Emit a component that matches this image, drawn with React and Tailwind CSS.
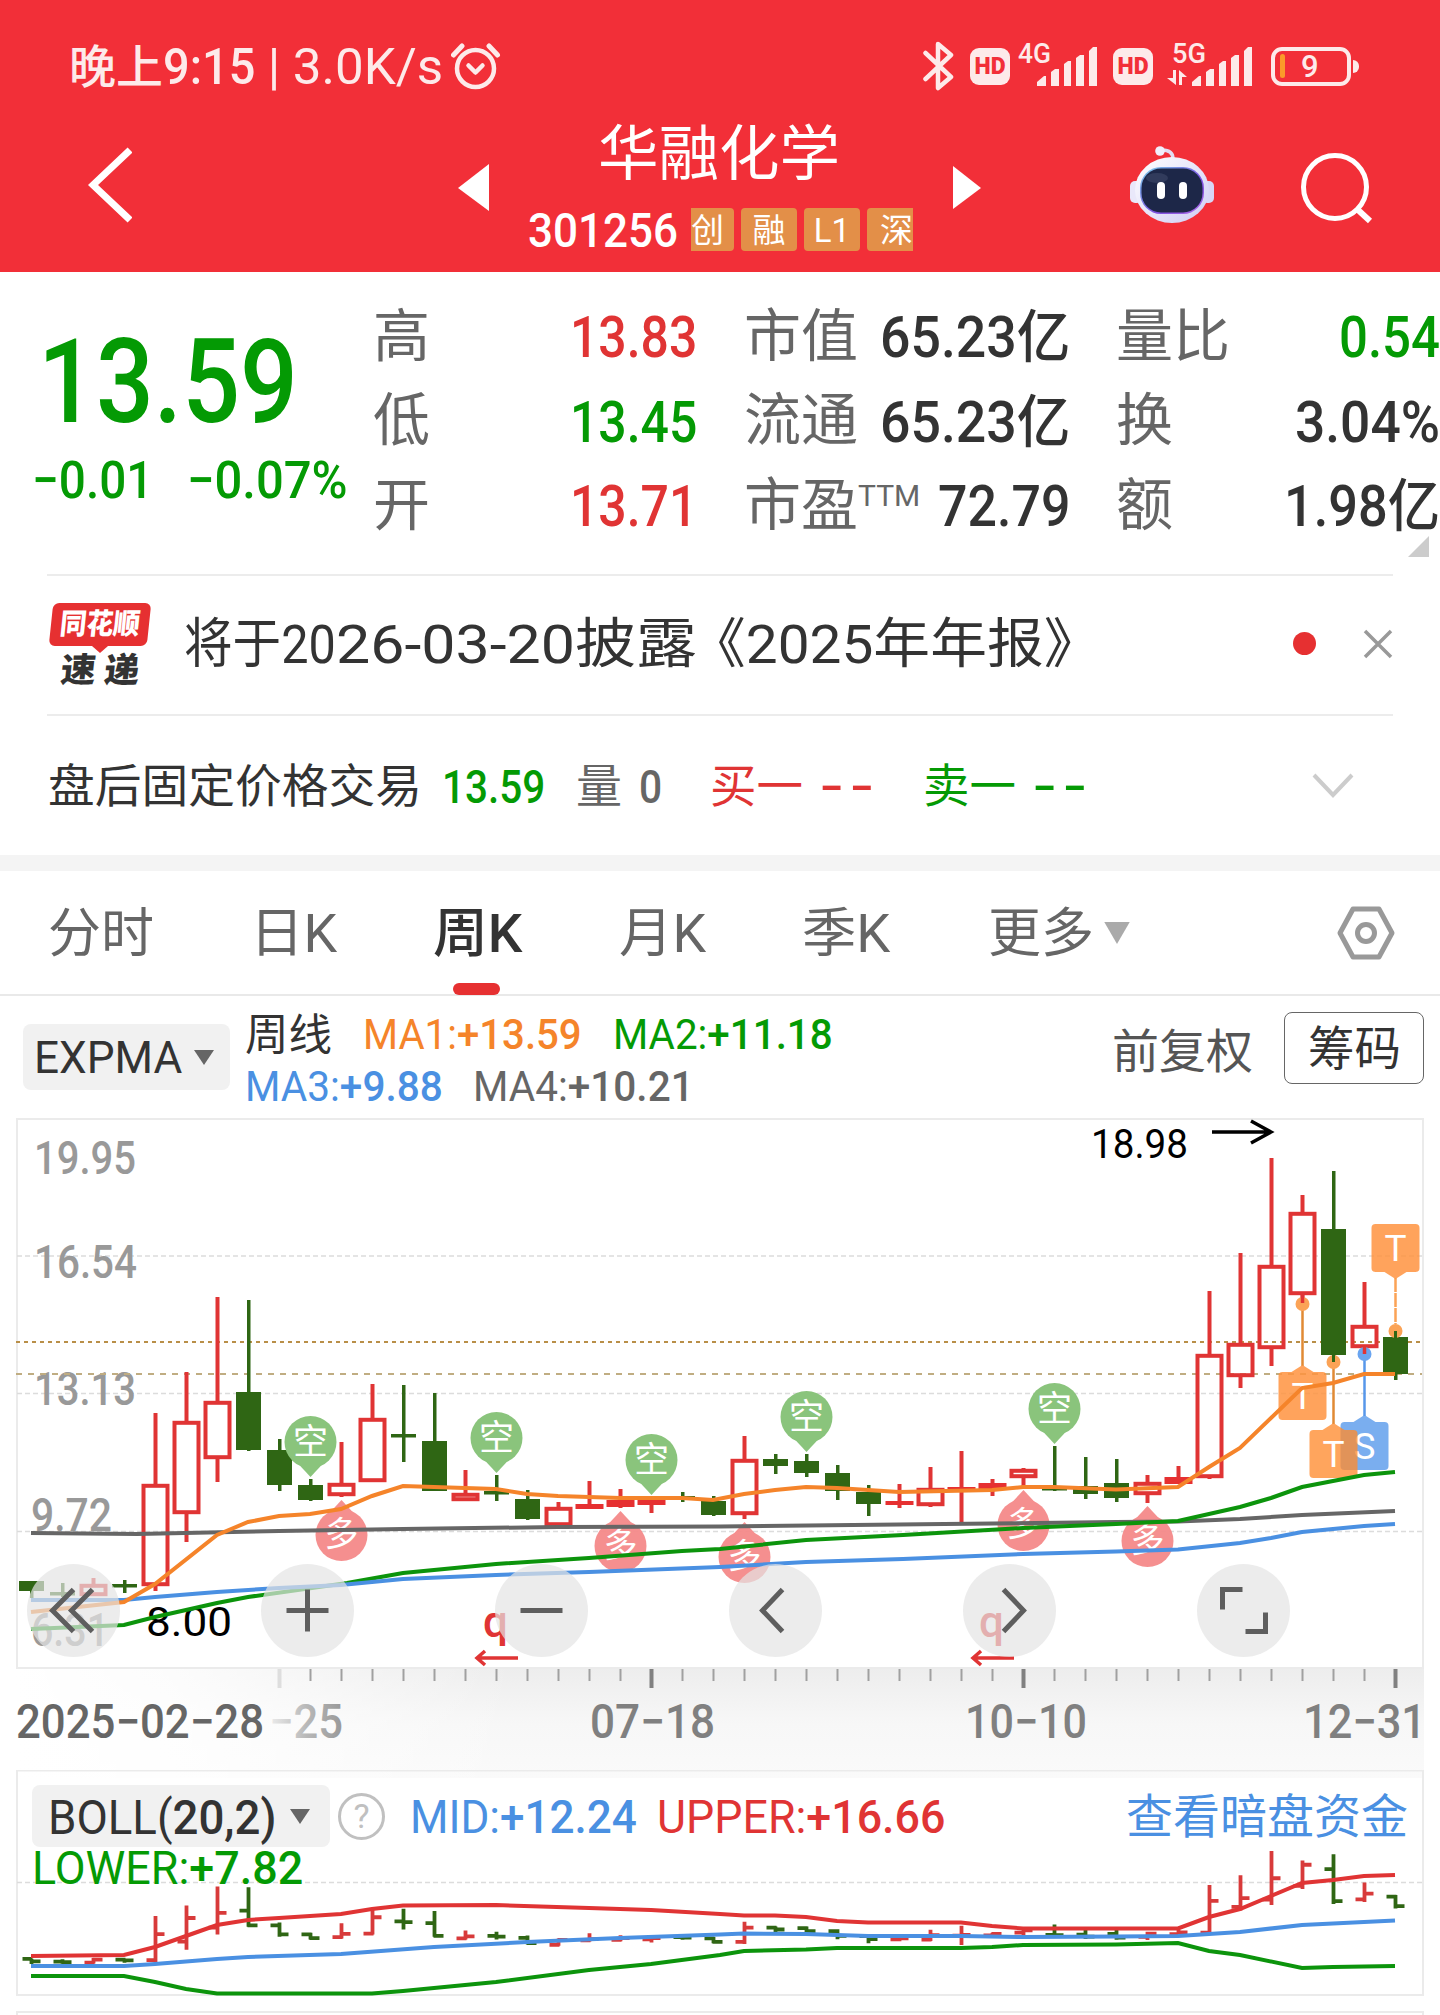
import { useLayoutEffect, useRef, useState } from "react";

const FONT = "font-['Roboto','Noto_Sans_CJK_SC',sans-serif]";
const SVG_FONT = "Roboto, 'Noto Sans CJK SC', sans-serif";

const RED = "#e03434";
const CANDLE_GREEN = "#2f6614";

// color, high, bodyTop, bodyBottom, low, filled
const candles = [
  ["g", 1581, 1581, 1591, 1598],
  ["g", 1583, 1592, 1594, 1597],
  ["r", 1578, 1584, 1596, 1596],
  ["g", 1580, 1584, 1587, 1593],
  ["r", 1413, 1484, 1586, 1591],
  ["r", 1372, 1421, 1514, 1542],
  ["r", 1297, 1401, 1459, 1482],
  ["g", 1300, 1392, 1450, 1451],
  ["g", 1439, 1450, 1485, 1491],
  ["g", 1479, 1485, 1500, 1501],
  ["r", 1442, 1483, 1496, 1497],
  ["r", 1384, 1418, 1482, 1482],
  ["g", 1385, 1434, 1437, 1462],
  ["g", 1393, 1441, 1491, 1491],
  ["r", 1470, 1493, 1501, 1501],
  ["g", 1475, 1491, 1494, 1501],
  ["g", 1490, 1499, 1519, 1520],
  ["r", 1502, 1507, 1526, 1526],
  ["r", 1481, 1504, 1509, 1509, true],
  ["r", 1489, 1500, 1507, 1508, true],
  ["r", 1497, 1500, 1505, 1513, true],
  ["g", 1492, 1496, 1498, 1502],
  ["g", 1496, 1501, 1515, 1516],
  ["r", 1436, 1459, 1515, 1519],
  ["g", 1454, 1459, 1466, 1474],
  ["g", 1454, 1461, 1473, 1477],
  ["g", 1465, 1473, 1491, 1500],
  ["g", 1485, 1492, 1504, 1516],
  ["r", 1484, 1501, 1505, 1508, true],
  ["r", 1467, 1488, 1506, 1507],
  ["r", 1451, 1487, 1490, 1523, true],
  ["r", 1479, 1483, 1489, 1496, true],
  ["r", 1468, 1469, 1478, 1487],
  ["g", 1446, 1487, 1488, 1491],
  ["g", 1457, 1486, 1494, 1499],
  ["g", 1459, 1483, 1498, 1502],
  ["r", 1475, 1482, 1495, 1503],
  ["r", 1466, 1477, 1484, 1484, true],
  ["r", 1291, 1354, 1478, 1479],
  ["r", 1253, 1343, 1377, 1388],
  ["r", 1158, 1265, 1349, 1366],
  ["r", 1195, 1212, 1295, 1303],
  ["g", 1171, 1229, 1355, 1362],
  ["r", 1282, 1325, 1348, 1354],
  ["g", 1331, 1337, 1374, 1380],
];

const candleX = (i) => 31.5 + 31 * i;

const maLines = [
  { color: "#666666", points: "31,1533 137,1534 279,1531 403,1529 558,1527 720,1526.5 944,1524 1116,1522 1178,1521.5 1240,1519 1302,1515 1395,1511" },
  { color: "#0c940c", points: "31,1629 124,1625 155,1617 217,1603 248,1597 347,1583 403,1573 496,1564 589,1558 682,1551 720,1549 806,1540 903,1535 1023,1528 1116,1524 1178,1521 1240,1507 1271,1498 1302,1487 1364,1475 1395,1472" },
  { color: "#4a90e2", points: "31,1600 124,1600 155,1597 217,1592 279,1588 341,1585 403,1579 496,1575 589,1572 720,1567 806,1562 903,1559 1023,1554 1116,1551.5 1178,1549.5 1240,1543 1271,1538 1302,1532 1364,1526 1395,1524" },
  { color: "#f5842a", points: "31,1612 124,1602 155,1584 217,1535 248,1522 279,1516 310,1514 341,1509 372,1496 403,1486 434,1487 496,1489 527,1494 558,1496 620,1498 682,1498 713,1500 744,1494 775,1490 806,1487 837,1488 899,1492 992,1490 1023,1487 1054,1487 1116,1489.5 1178,1487 1209,1467 1240,1448 1302,1388 1333,1383 1364,1374 1395,1374" },
];

const bollLines = [
  { color: "#e03434", points: "31,1956 124,1955 155,1947 186,1936 217,1925 248,1920 279,1918 341,1914 372,1909 403,1905.5 496,1905 589,1908 651,1910 720,1914 744,1915.5 775,1915.5 806,1917 837,1921 868,1922.5 961,1922.5 992,1926 1023,1928.5 1178,1928.5 1209,1917 1240,1909 1302,1883 1333,1880 1364,1876 1395,1875" },
  { color: "#4a90e2", points: "31,1966 124,1966 155,1964 217,1959 248,1957 341,1954 434,1947 527,1942 620,1938 720,1934.5 744,1933.5 806,1934 868,1936 961,1936 1023,1937 1116,1936.5 1178,1936 1240,1932 1302,1925 1364,1922 1395,1920.5" },
  { color: "#0c940c", points: "31,1976 124,1976 155,1982 186,1989 217,1993.5 372,1993.5 403,1991 434,1988 496,1982 589,1970 651,1964 720,1955 744,1951 806,1949.5 837,1948 961,1948 992,1947 1023,1945 1116,1944.5 1178,1943 1209,1951 1240,1955 1302,1968 1333,1967 1395,1966" },
];

const quotes = [
  { a: "高", av: "13.83", ac: "text-[#e03434]", b: "市值", bv: "65.23亿", bw: 190, c: "量比", cw: 114, cv: "0.54", cvw: 101, cc: "text-[#049a04]" },
  { a: "低", av: "13.45", ac: "text-[#049a04]", b: "流通", bv: "65.23亿", bw: 190, c: "换", cw: 57, cv: "3.04%", cvw: 145, cc: "text-[#333]" },
  { a: "开", av: "13.71", ac: "text-[#e03434]", b: "市盈", ttm: true, bv: "72.79", bw: 132, c: "额", cw: 57, cv: "1.98亿", cvw: 156, cc: "text-[#333]" },
];

// Text squeezed to an exact width
function Fit({ w, className = "", children }) {
  const ref = useRef(null);
  const [scale, setScale] = useState(1);

  useLayoutEffect(() => {
    setScale(w / ref.current.offsetWidth);
  }, [w]);

  return (
    <span className={`flex shrink-0 items-center ${className}`} style={{ width: w }}>
      <span
        ref={ref}
        className="inline-block origin-left whitespace-pre leading-none"
        style={{ transform: `scaleX(${scale})` }}
      >
        {children}
      </span>
    </span>
  );
}

// Indicator name in regular weight, its value in medium
function Reading({ name, value, w, className }) {
  return (
    <Fit w={w} className={className}>
      {name}
      <span className="font-medium">{value}</span>
    </Fit>
  );
}

function Label({ x, y, w, size, fill = "#999", weight = 400, children }) {
  return (
    <text x={x} y={y} textLength={w} lengthAdjust="spacingAndGlyphs" fontSize={size} fill={fill} fontWeight={weight} fontFamily={SVG_FONT}>
      {children}
    </text>
  );
}

function Caret({ className = "", color = "#666", w = 22, h = 15 }) {
  return (
    <svg width={w} height={h} viewBox="0 0 22 15" preserveAspectRatio="none" className={`shrink-0 ${className}`}>
      <path d="M1 0h20L11 15z" fill={color} />
    </svg>
  );
}

function Signal() {
  return (
    <svg width="61" height="40" viewBox="0 0 61 40" fill="#fdeaea">
      <path d="M0 39V35L7 29H9V39z" />
      <path d="M14 39V25L18 22H22V39z" />
      <path d="M27 39V17L31 14H34V39z" />
      <path d="M39 39V11L43 8H47V39z" />
      <path d="M52 39V4L56 0H60V39z" />
    </svg>
  );
}

function HdBadge({ className }) {
  return (
    <div className={`flex h-[37px] w-10 shrink-0 items-center justify-center rounded-[9px] bg-[#fdeaea] ${className}`}>
      <Fit w={31} className="text-[23px] font-black text-[#f22f38]">HD</Fit>
    </div>
  );
}

function StatusBar() {
  return (
    <div className="flex h-[104px] items-center pt-[29px] text-[#fdeaea]">
      <Fit w={94} className="ml-[69px] h-[50px] text-[46px] font-medium">晚上</Fit>
      <Fit w={92} className="h-[50px] text-[50px] font-medium">9:15</Fit>
      <Fit w={188} className="h-[50px] text-[50px]"> | 3.0K/s</Fit>
      <svg width="50" height="48" viewBox="0 0 50 48" className="ml-2 mt-[-2px]" fill="none" stroke="#fdeaea" strokeWidth="4.5" strokeLinecap="round" strokeLinejoin="round">
        <circle cx="24.5" cy="26.5" r="18.5" />
        <path d="M2.5 13 L11 4 M38 4 L46.500 13" strokeWidth="5" />
        <path d="M17.500 23.500 L24.500 30.500 L31.500 23.500" />
      </svg>
      <svg width="32" height="50" viewBox="0 0 32 50" className="ml-[422px] mt-[-2px]" fill="none" stroke="#fdeaea" strokeWidth="4.500" strokeLinejoin="round" strokeLinecap="round">
        <path d="M2.500 12 L28 36 L15 47 V3 L28 14 L2.500 38" />
      </svg>
      <HdBadge className="ml-[15px]" />
      <Fit w={33} className="ml-2 mt-[-26px] text-[28px] font-medium">4G</Fit>
      <div className="-ml-3.5">
        <Signal />
      </div>
      <HdBadge className="ml-[15px]" />
      <div className="ml-[14px] mt-[-6px] flex w-[38px] flex-col">
        <Fit w={34} className="ml-[5px] h-[26px] text-[28px] font-medium">5G</Fit>
        <svg width="21" height="16" viewBox="0 0 21 16" className="mt-[3px]" fill="#fdeaea">
          <path d="M6 0H9V15L0 8H6zM12 15V0L20 7H15V15z" />
        </svg>
      </div>
      <div className="ml-[-13px]">
        <Signal />
      </div>
      <div className="ml-[18px] mt-[-1px] flex h-[39px] w-20 items-center rounded-[11px] border-4 border-[#fdeaea] pl-[5px]">
        <span className="h-6 w-[5px] rounded-sm bg-[#fb9a2a]" />
        <span className="ml-4 text-[31px] font-medium leading-none">9</span>
      </div>
      <span className="ml-0.5 h-[13px] w-1.5 rounded-r-md bg-[#fdeaea]" />
    </div>
  );
}

function Robot() {
  return (
    <svg width="86" height="80" viewBox="0 0 86 80" className="shrink-0">
      <defs>
        <linearGradient id="shell" x1="0" y1="0" x2="1" y2="1">
          <stop offset="0" stopColor="#ffffff" />
          <stop offset="1" stopColor="#cfcdf4" />
        </linearGradient>
        <linearGradient id="rim" x1="0" y1="0" x2="1" y2="1">
          <stop offset="0" stopColor="#79cfe8" />
          <stop offset="0.6" stopColor="#7a4fe0" />
          <stop offset="1" stopColor="#b06be8" />
        </linearGradient>
      </defs>
      <path d="M44 14C44 7 39 5 33 5" fill="none" stroke="#e2ddf3" strokeWidth="3.500" />
      <circle cx="31" cy="6" r="4.800" fill="#f1eefb" />
      <rect x="1" y="36" width="12" height="22" rx="5" fill="#e9e8fa" />
      <rect x="73" y="36" width="12" height="22" rx="5" fill="#d8d6f5" />
      <ellipse cx="43" cy="45" rx="37" ry="33" fill="url(#shell)" />
      <rect x="11" y="22" width="64" height="47" rx="21" fill="url(#rim)" />
      <rect x="12.500" y="23.500" width="61" height="44" rx="19.500" fill="#1d2748" />
      <ellipse cx="28" cy="33" rx="11" ry="5" fill="#46506f" opacity="0.5" />
      <rect x="28" y="37" width="8" height="17" rx="4" fill="#fff" />
      <rect x="50" y="37" width="8" height="17" rx="4" fill="#fff" />
    </svg>
  );
}

function Header() {
  return (
    <header className="h-[272px] overflow-hidden bg-[#f22f38] text-white">
      <StatusBar />
      <div className="flex h-[168px] items-start">
        <svg width="44" height="80" viewBox="0 0 44 80" className="ml-[88px] mt-[41px]">
          <path d="M42 5 L5 40 L42 75" fill="none" stroke="#fff" strokeWidth="7" />
        </svg>
        <svg width="32" height="48" viewBox="0 0 32 48" className="ml-[326px] mt-[60px]">
          <path d="M31 0V47L0 24z" fill="#fff" />
        </svg>
        <div className="ml-[37px] flex w-[387px] flex-col">
          <Fit w={242} className="ml-[71px] mt-[20px] h-[62px] text-[60px]">华融化学</Fit>
          <div className="mt-[20px] flex h-[46px] items-center">
            <Fit w={150} className="ml-px mt-[3px] text-[49px] font-medium">301256</Fit>
            <div className="ml-[13px] flex h-[43px] items-center gap-[7px] text-[33px] leading-none">
              <span className="flex h-full w-[43px] items-center rounded-r bg-[#e38f48] pt-0.5">创</span>
              <span className="flex h-full w-14 items-center justify-center rounded bg-[#e38f48] pt-0.5">融</span>
              <span className="flex h-full w-14 items-center justify-center rounded bg-[#e38f48] pt-0.5">L1</span>
              <span className="flex h-full w-[46px] items-center justify-end rounded-l bg-[#e38f48] pt-0.5">深</span>
            </div>
          </div>
        </div>
        <svg width="28" height="44" viewBox="0 0 28 44" className="ml-[39px] mt-[62px]">
          <path d="M0 0V43L28 22z" fill="#fff" />
        </svg>
        <div className="ml-[148px] mt-[41px]">
          <Robot />
        </div>
        <svg width="72" height="72" viewBox="0 0 72 72" className="ml-[86px] mt-[48px]" fill="none" stroke="#fff" strokeWidth="5">
          <circle cx="34" cy="35" r="31.500" />
          <path d="M56 57 L69 69" strokeWidth="6" />
        </svg>
      </div>
    </header>
  );
}

function QuotePanel() {
  return (
    <section className="flex h-[302px] overflow-hidden">
      <div className="w-[373px] shrink-0 pt-[52px]">
        <Fit w={260} className="ml-[38px] h-[116px] text-[116px] font-medium text-[#049a04]">13.59</Fit>
        <div className="mt-[15px] flex h-[52px] text-[52px] font-medium text-[#049a04]">
          <Fit w={121} className="ml-8">−0.01</Fit>
          <Fit w={161} className="ml-[34px]">−0.07%</Fit>
        </div>
      </div>
      <div className="relative w-[1067px] pt-[22px]">
        {quotes.map((q) => (
          <div key={q.a} className="flex h-[84.5px] items-center text-[57px]">
            <Fit w={57} className="text-[#666]">{q.a}</Fit>
            <Fit w={127} className={`ml-[140px] mt-[3px] font-medium ${q.ac}`}>{q.av}</Fit>
            <Fit w={114} className="ml-[47px] text-[#666]">{q.b}</Fit>
            <div className="flex w-[212px] items-center justify-end">
              {q.ttm && <Fit w={62} className="mb-[18px] mr-auto text-[30px] text-[#666]">TTM</Fit>}
              <Fit w={q.bw} className="mt-[3px] font-medium text-[#333]">{q.bv}</Fit>
            </div>
            <Fit w={q.cw} className="ml-[46px] text-[#666]">{q.c}</Fit>
            <div className="flex flex-1 justify-end">
              <Fit w={q.cvw} className={`mt-[3px] font-medium ${q.cc}`}>{q.cv}</Fit>
            </div>
          </div>
        ))}
        <svg width="21" height="21" viewBox="0 0 21 21" className="absolute right-[11px] top-[264px]">
          <path d="M21 0V21H0z" fill="#ccc" />
        </svg>
      </div>
    </section>
  );
}

function NoticeRow() {
  return (
    <section className="mx-[47px] flex h-[140px] items-center border-t-2 border-[#ececec] pb-1">
      <div className="mt-[3px] flex w-[105px] flex-col items-center">
        <div className="flex h-[43px] w-[98px] -skew-x-6 items-center justify-center rounded-md bg-[#e63031]">
          <Fit w={80} className="text-[29px] font-black text-white">同花顺</Fit>
        </div>
        <svg width="16" height="7" viewBox="0 0 16 7">
          <path d="M0 0H16L8 7z" fill="#e63031" />
        </svg>
        <div className="-skew-x-6">
          <Fit w={78} className="text-[34px] font-black text-[#333]">速 递</Fit>
        </div>
      </div>
      <Fit w={152} className="ml-[32px] mt-[3px] text-[54px] text-[#333]">将于20</Fit>
      <Fit w={361} className="mt-[3px] text-[54px] text-[#333]">26-03-20披露</Fit>
      <Fit w={411} className="ml-[-8px] mt-[3px] text-[54px] text-[#333]">《2025年年报》</Fit>
      <span className="ml-[193px] size-[23px] rounded-full bg-[#e63031]" />
      <svg width="30" height="30" viewBox="0 0 30 30" className="ml-[47px] mt-0.5">
        <path d="M2 2 L28 28 M28 2 L2 28" stroke="#999" strokeWidth="3.500" />
      </svg>
    </section>
  );
}

function AfterHoursRow() {
  return (
    <section className="mx-[47px] flex h-[141px] items-center border-t-2 border-[#ececec] pl-px text-[46px]">
      <Fit w={374} className="text-[#333]">盘后固定价格交易</Fit>
      <Fit w={103} className="ml-[20px] mt-0.5 font-medium text-[#049a04]">13.59</Fit>
      <Fit w={46} className="ml-[31px] text-[#666]">量</Fit>
      <Fit w={23} className="ml-[17px] mt-0.5 font-medium text-[#666]">0</Fit>
      <Fit w={93} className="ml-[48px] text-[#e03434]">买一</Fit>
      <Fit w={60} className="ml-[17px] font-medium tracking-[0.1em] text-[#e03434]">--</Fit>
      <Fit w={93} className="ml-[43px] text-[#049a04]">卖一</Fit>
      <Fit w={60} className="ml-[17px] font-medium tracking-[0.1em] text-[#049a04]">--</Fit>
      <svg width="42" height="26" viewBox="0 0 42 26" className="ml-[219px]">
        <path d="M2 2 L21 22 L40 2" fill="none" stroke="#ccc" strokeWidth="4" />
      </svg>
    </section>
  );
}

function Tabs() {
  return (
    <nav className="flex h-[125px] items-center border-b-2 border-[#e9e9e9] pl-[48px] pt-1 text-[53px] text-[#666]">
      <Fit w={106}>分时</Fit>
      <Fit w={87} className="ml-[96px]">日K</Fit>
      <div className="relative ml-[96px]">
        <Fit w={90} className="font-medium text-[#333]">周K</Fit>
        <span className="absolute left-[20px] top-[75px] h-3 w-[47px] rounded-full bg-[#e63031]" />
      </div>
      <Fit w={87} className="ml-[96px]">月K</Fit>
      <Fit w={88} className="ml-[96px]">季K</Fit>
      <Fit w={106} className="ml-[98px]">更多</Fit>
      <Caret w={28} h={22} color="#aaa" className="ml-[9px] mt-[-3px]" />
      <svg width="58" height="54" viewBox="0 0 58 54" className="ml-[206px] mt-[-3px]" fill="none" stroke="#999" strokeWidth="5" strokeLinejoin="round">
        <path d="M16 3 H42 L55 27 L42 51 H16 L3 27z" />
        <circle cx="29" cy="27" r="8.500" />
      </svg>
    </nav>
  );
}

function IndicatorBar() {
  return (
    <div className="flex h-[122px] items-start">
      <div className="ml-[23px] mt-[28px] flex h-[66px] w-[207px] items-center rounded-lg bg-[#f1f1f1] pl-[11px]">
        <Fit w={148} className="mt-px text-[45px] text-[#333]">EXPMA</Fit>
        <Caret className="ml-[11px]" />
      </div>
      <div className="ml-[15px] mt-[12px] w-[600px] text-[42px]">
        <div className="flex h-[54px] items-center">
          <Fit w={87} className="text-[43px] text-[#333]">周线</Fit>
          <Reading w={219} className="ml-[31px] text-[#f5842a]" name="MA1:" value="+13.59" />
          <Reading w={220} className="ml-[31px] text-[#049a04]" name="MA2:" value="+11.18" />
        </div>
        <div className="flex h-[50px] items-center">
          <Reading w={198} className="text-[#4a90e2]" name="MA3:" value="+9.88" />
          <Reading w={221} className="ml-[30px] text-[#666]" name="MA4:" value="+10.21" />
        </div>
      </div>
      <Fit w={141} className="ml-[267px] mt-[32px] text-[47px] text-[#555]">前复权</Fit>
      <div className="ml-[31px] mt-[16px] flex h-[72px] w-[140px] items-center justify-center rounded-lg border border-[#666]">
        <Fit w={93} className="text-[47px] text-[#333]">筹码</Fit>
      </div>
    </div>
  );
}

function ShortPin({ x, top }) {
  return (
    <g>
      <circle cx={x} cy={top + 26} r="26" fill="#8ac47c" />
      <path d={`M${x - 13} ${top + 47} L${x} ${top + 61} L${x + 13} ${top + 47}z`} fill="#8ac47c" />
      <text x={x} y={top + 38} textAnchor="middle" fontSize="35" fill="#fff" fontFamily={SVG_FONT}>空</text>
    </g>
  );
}

function LongPin({ x, top }) {
  return (
    <g opacity="0.95">
      <path d={`M${x - 13} ${top + 14} L${x} ${top} L${x + 13} ${top + 14}z`} fill="#f58a8a" />
      <circle cx={x} cy={top + 35} r="26" fill="#f58a8a" />
      <text x={x} y={top + 46} textAnchor="middle" fontSize="34" fill="#fff" fontFamily={SVG_FONT}>多</text>
    </g>
  );
}

function TradeMark({ x, y, up, color, letter, opacity }) {
  const tip = up ? `M${x - 11} ${y} L${x} ${y - 7} L${x + 11} ${y}z` : `M${x - 11} ${y + 48} L${x} ${y + 55} L${x + 11} ${y + 48}z`;
  return (
    <g>
      <g opacity={opacity}>
        <rect x={x - 24} y={y} width="48" height="48" rx="4" fill={color} />
        <path d={tip} fill={color} />
      </g>
      <text x={x} y={y + 37} textAnchor="middle" fontSize="37" fill="#fff" fontFamily={SVG_FONT}>{letter}</text>
    </g>
  );
}

function Candle({ i, data }) {
  const [color, high, top, bottom, low, filled] = data;
  const x = candleX(i);
  if (color === "g") {
    return (
      <g fill={CANDLE_GREEN}>
        <rect x={x - 1.5} y={high} width="3.5" height={low - high} />
        <rect x={x - 12.5} y={top} width="25" height={Math.max(bottom - top, 3.5)} />
      </g>
    );
  }
  return (
    <g stroke={RED} strokeWidth="4" fill="none">
      <path d={`M${x} ${high}V${top} M${x} ${bottom}V${low}`} />
      {filled ? (
        <rect x={x - 14} y={top} width="28" height={bottom - top} fill="#e63031" stroke="none" />
      ) : (
        <rect x={x - 12} y={top + 1.8} width="24" height={bottom - top - 3.6} />
      )}
    </g>
  );
}

function RoundButton({ x, children }) {
  return (
    <g>
      <circle cx={x} cy="1610.5" r="46.5" fill="#e4e4e4" opacity="0.7" />
      <g transform={`translate(${x} 1610.5)`} fill="none" stroke="#5e5e5e" strokeWidth="5">
        {children}
      </g>
    </g>
  );
}

function KLineChart() {
  return (
    <svg width="1440" height="551" viewBox="0 1118 1440 551" className="block">
      <rect x="17" y="1119" width="1406" height="549" fill="none" stroke="#ebebeb" strokeWidth="2" />
      {[1256, 1393.5, 1531.5].map((y) => (
        <path key={y} d={`M17 ${y}H1422`} stroke="#dcdcdc" strokeWidth="1.300" strokeDasharray="5 3" />
      ))}
      <Label x={34} y={1174} w={102} size={46} weight={500}>19.95</Label>
      <Label x={34} y={1277.5} w={103} size={46} weight={500}>16.54</Label>
      <Label x={34} y={1405} w={102} size={46} weight={500}>13.13</Label>
      <Label x={31} y={1531} w={81} size={46} weight={500}>9.72</Label>
      <Label x={31} y={1646} w={78} size={46} weight={500}>6.31</Label>
      <path d="M16 1342H1422" stroke="#b98f48" strokeWidth="2" strokeDasharray="4 4" />
      <path d="M16 1374H1422" stroke="#c0ad82" strokeWidth="2" strokeDasharray="6 6" />

      {candles.map((c, i) => (
        <Candle key={i} i={i} data={c} />
      ))}

      {[[310.5, 1416], [496.5, 1412], [651.5, 1434], [806.5, 1391], [1054.5, 1383]].map(([x, top]) => (
        <ShortPin key={x} x={x} top={top} />
      ))}
      {[[341.5, 1500], [620.5, 1511], [744.5, 1522], [1023.5, 1490], [1147.5, 1506]].map(([x, top]) => (
        <LongPin key={x} x={x} top={top} />
      ))}

      {/* trade marks */}
      <g strokeWidth="2.500">
        <path d="M1395.500 1278V1324" stroke="#fba356" strokeDasharray="14 1" />
        <path d="M1302.500 1304V1366" stroke="#e08a34" />
        <path d="M1333.500 1362V1424" stroke="#e08a34" />
        <path d="M1364.500 1354V1416" stroke="#5797ea" />
      </g>
      <circle cx="1395.5" cy="1331" r="7" fill="#fba356" />
      <circle cx="1302.5" cy="1304" r="7" fill="#fba356" />
      <circle cx="1333.5" cy="1362" r="7" fill="#fba356" />
      <circle cx="1364.5" cy="1354" r="7" fill="#6aa5f0" />
      <path d="M1302.500 1295V1303 M1364.500 1347V1354" stroke={RED} strokeWidth="3.500" />
      <path d="M1333.500 1354V1362 M1395.500 1331V1338" stroke={CANDLE_GREEN} strokeWidth="3" />
      <TradeMark x={1395.5} y={1224} color="#ff9440" letter="T" opacity={0.85} />
      <TradeMark x={1302.5} y={1372} up color="#ff9440" letter="T" opacity={0.85} />
      <TradeMark x={1364.5} y={1422} up color="#5a9bec" letter="S" opacity={0.8} />
      <TradeMark x={1333.5} y={1430} up color="#ff8c30" letter="T" opacity={0.78} />

      <Label x={1091} y={1158} w={97} size={41} fill="#000">18.98</Label>
      <path d="M1212 1132H1271 M1251 1121L1271 1132L1251 1143" fill="none" stroke="#000" strokeWidth="3.500" />
      <Label x={146} y={1636} w={86} size={41} fill="#000">8.00</Label>
      {[476, 972].map((x) => (
        <g key={x}>
          <text x={x + 7} y={1637} fontSize="44" fontWeight="500" fill={RED} fontFamily={SVG_FONT}>q</text>
          <path d={`M${x + 42} 1658H${x + 2} M${x + 9} 1651L${x + 1} 1658L${x + 9} 1665`} fill="none" stroke={RED} strokeWidth="3.500" />
        </g>
      ))}

      {maLines.map((l) => (
        <polyline key={l.color} points={l.points} fill="none" stroke={l.color} strokeWidth="4" />
      ))}

      <RoundButton x={73.5}>
        <path d="M0 -21L-21 0L0 21 M19 -21L-2 0L19 21" />
      </RoundButton>
      <RoundButton x={307.5}>
        <path d="M-21 0H21 M0 -21V21" />
      </RoundButton>
      <RoundButton x={541.5}>
        <path d="M-21 0H21" />
      </RoundButton>
      <RoundButton x={775.500}>
        <path d="M7 -21L-13 0L7 21" />
      </RoundButton>
      <RoundButton x={1009.5}>
        <path d="M-6 -21L14 0L-6 21" />
      </RoundButton>
      <RoundButton x={1243.500}>
        <path d="M-21 -1V-21H-1 M2 21H22V2" />
      </RoundButton>
    </svg>
  );
}

function TimeAxis() {
  return (
    <svg width="1440" height="101" viewBox="0 1669 1440 101" className="block overflow-visible">
      <defs>
        <linearGradient id="axisBg" x1="0" y1="0" x2="0" y2="1">
          <stop offset="0" stopColor="#ededed" />
          <stop offset="0.5" stopColor="#f7f7f7" />
          <stop offset="1" stopColor="#fafafa" />
        </linearGradient>
        <linearGradient id="axisFade" x1="0" y1="0" x2="1" y2="0">
          <stop offset="0" stopColor="#fff" />
          <stop offset="0.3" stopColor="#fff" stopOpacity="0.85" />
          <stop offset="1" stopColor="#fff" stopOpacity="0" />
        </linearGradient>
        <linearGradient id="dateFade" gradientUnits="userSpaceOnUse" x1="268" y1="0" x2="345" y2="0">
          <stop offset="0" stopColor="#eeeeee" />
          <stop offset="0.5" stopColor="#b8b8b8" />
          <stop offset="1" stopColor="#979797" />
        </linearGradient>
      </defs>
      <rect x="16" y="1669" width="1408" height="109" fill="url(#axisBg)" />
      <rect x="16" y="1669" width="500" height="109" fill="url(#axisFade)" />
      {candles.map((c, i) => {
        if (i < 8) return null;
        const major = i % 12 === 8;
        return (
          <path
            key={i}
            d={`M${candleX(i)} 1669V${major ? 1688 : 1681}`}
            stroke={i === 8 ? "#dedede" : major ? "#808080" : "#a0a0a0"}
            strokeWidth={major ? 4 : 2}
          />
        );
      })}
      <Label x={269} y={1738} w={74} size={48} weight={500} fill="url(#dateFade)">−25</Label>
      <Label x={16} y={1738} w={248} size={48} weight={500} fill="#666">2025−02−28</Label>
      <Label x={590} y={1738} w={125} size={48} weight={500} fill="#808080">07−18</Label>
      <Label x={965} y={1738} w={122} size={48} weight={500} fill="#808080">10−10</Label>
      <Label x={1303} y={1738} w={123} size={48} weight={500} fill="#808080">12−31</Label>
    </svg>
  );
}

function BollPanel() {
  const toY = (y) => 1851 + (y - 1158) * 0.2548;
  return (
    <section className="relative h-[226px]">
      <svg width="1440" height="226" viewBox="0 1770 1440 226" className="absolute left-0 top-0">
        <rect x="17" y="1770.5" width="1406" height="224.5" fill="none" stroke="#ebebeb" strokeWidth="2" />
        <path d="M17 1882.500H1422" stroke="#dcdcdc" strokeWidth="1.300" strokeDasharray="5 3" />
        {candles.map(([color, high, top, bottom, low], i) => {
          const x = candleX(i);
          const open = toY(color === "g" ? top : bottom);
          const close = toY(color === "g" ? bottom : top);
          return (
            <path
              key={i}
              d={`M${x} ${toY(high)}V${toY(low) + 1} M${x - 9} ${open}H${x + 1} M${x - 1} ${close}H${x + 9}`}
              stroke={color === "g" ? CANDLE_GREEN : "#d83a3a"}
              strokeWidth="3.800"
            />
          );
        })}
        {bollLines.map((l) => (
          <polyline key={l.color} points={l.points} fill="none" stroke={l.color} strokeWidth="4" />
        ))}
      </svg>
      <div className="relative flex h-[77px] items-center pt-[15px] text-[46px]">
        <div className="ml-[32px] flex h-[62px] w-[298px] items-center rounded-lg bg-[#f1f1f1] pl-[16px]">
          <Reading w={228} className="mt-1 text-[48px] text-[#333]" name="BOLL(" value="20,2)" />
          <Caret className="ml-[13px]" />
        </div>
        <div className="ml-2 flex size-[47px] items-center justify-center rounded-full border-[3px] border-[#c0c0c0] text-[34px] leading-none text-[#c0c0c0]">
          ?
        </div>
        <Reading w={227} className="ml-[25px] mt-px text-[#4a90e2]" name="MID:" value="+12.24" />
        <Reading w={288} className="ml-[20px] mt-px text-[#e03434]" name="UPPER:" value="+16.66" />
        <Fit w={282} className="ml-[181px] text-[47px] text-[#4a90e2]">查看暗盘资金</Fit>
      </div>
      <Reading w={271} className="relative ml-[32px] mt-[-2px] text-[46px] text-[#049a04]" name="LOWER:" value="+7.82" />
    </section>
  );
}

export default function App() {
  return (
    <div className={`h-[2015px] w-[1440px] overflow-hidden bg-white ${FONT}`}>
      <Header />
      <QuotePanel />
      <NoticeRow />
      <AfterHoursRow />
      <div className="h-4 bg-[#f4f4f4]" />
      <Tabs />
      <IndicatorBar />
      <KLineChart />
      <TimeAxis />
      <BollPanel />
      <div className="mx-4 mt-[15px] h-10 border-2 border-[#ebebeb]" />
    </div>
  );
}
